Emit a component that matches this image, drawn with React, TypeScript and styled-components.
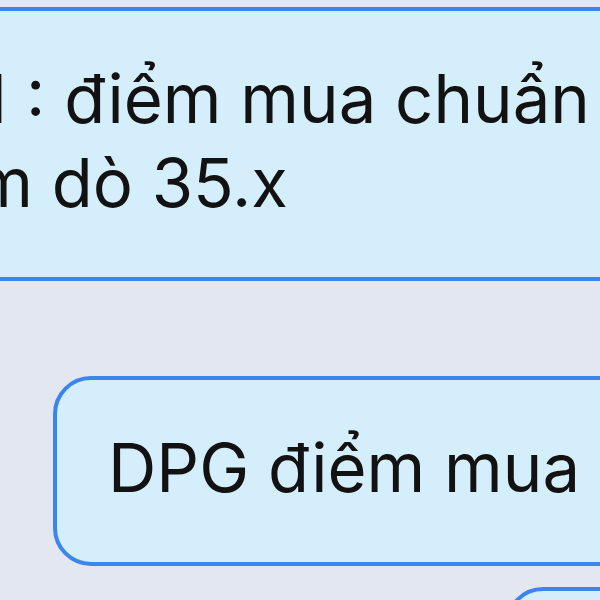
import styled, { createGlobalStyle } from "styled-components";

const GlobalStyle = createGlobalStyle`
  html, body {
    margin: 0;
    padding: 0;
    background: #e3e7f1;
  }
  body {
    font-family: Inter, "Noto Sans", "Liberation Sans", sans-serif;
  }
`;

type BubbleProps = {
  $left: number;
  $top: number;
  $width: number;
  $padLeft: number;
};

const Screen = styled.div`
  width: 600px;
  height: 600px;
  overflow: hidden;
  display: flex;
  flex-direction: column;
  align-items: flex-start;
  background: #e3e7f1;
`;

const Bubble = styled.div<BubbleProps>`
  box-sizing: border-box;
  flex-shrink: 0;
  margin-left: ${(p) => p.$left}px;
  margin-top: ${(p) => p.$top}px;
  width: ${(p) => p.$width}px;
  padding: 46px 0 52px ${(p) => p.$padLeft}px;
  background: #d5eefb;
  border: 4px solid #3d85ee;
  border-radius: 38px;
`;

const Text = styled.p<{ $indent?: number }>`
  margin: 0;
  font-size: 67px;
  line-height: 84px;
  color: #121212;
  white-space: nowrap;
  text-indent: ${(p) => p.$indent ?? 0}px;
`;

const App = () => {
  return (
    <>
      <GlobalStyle />
      <Screen>
        <Bubble $left={-160} $top={7} $width={960} $padLeft={31}>
          <Text $indent={105}>
            1 : điểm mua chuẩn
            <br />
            thăm dò 35.x
          </Text>
        </Bubble>
        <Bubble $left={53} $top={95} $width={700} $padLeft={51}>
          <Text>DPG điểm mua</Text>
        </Bubble>
        <Bubble $left={505} $top={21} $width={400} $padLeft={52}>
          <Text>&nbsp;</Text>
        </Bubble>
      </Screen>
    </>
  );
};

export default App;
